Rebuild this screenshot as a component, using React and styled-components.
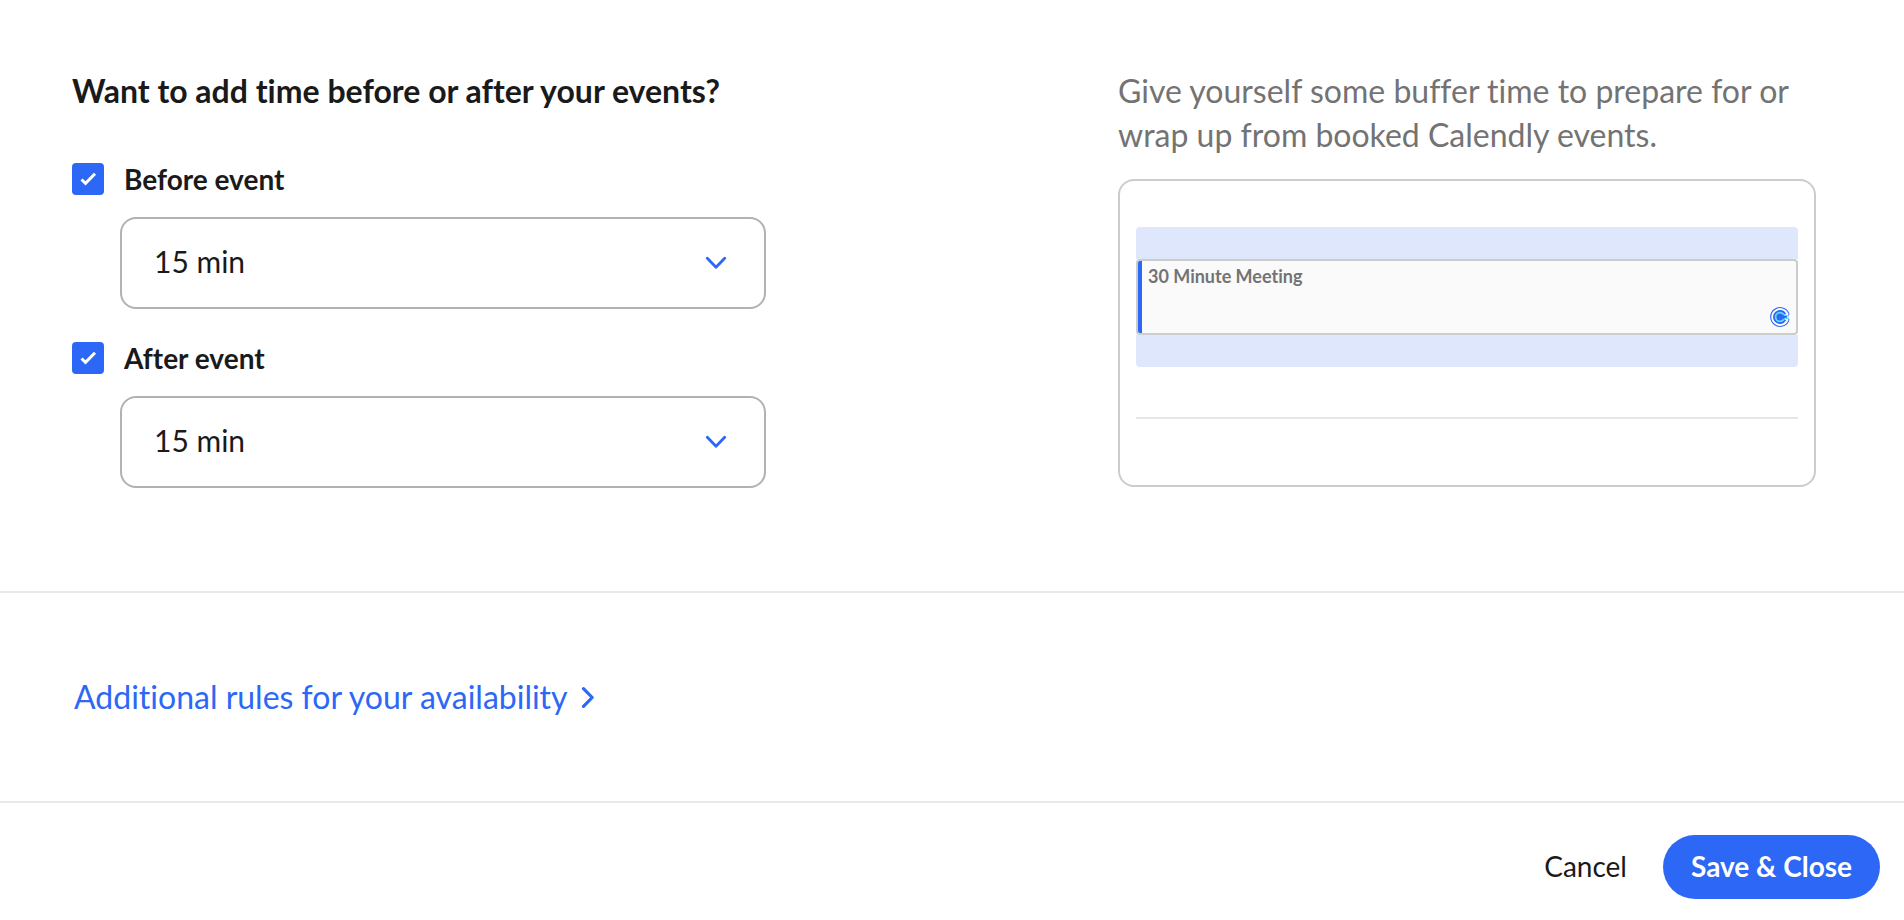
import React, { useId, useState } from "react";
import styled, { createGlobalStyle } from "styled-components";

const blue = "#2c67f6";

const GlobalStyle = createGlobalStyle`
  *, *::before, *::after { box-sizing: border-box; }
  body {
    margin: 0;
    background: #fff;
    color: #1a1a1a;
    font-family: Lato, "Open Sans", sans-serif;
    font-variant-ligatures: none;
  }
`;

const Page = styled.main`
  display: flex;
  flex-direction: column;
  min-height: 100vh;
`;

const BufferSection = styled.section`
  display: grid;
  grid-template-columns: 347fr 349fr;
  column-gap: 352px;
  padding: 69px 88px 103px 72px;
  border-bottom: 2px solid #e9e9e9;
`;

const Column = styled.div`
  display: flex;
  flex-direction: column;
  align-self: start;
  min-width: 0;
`;

const Title = styled.h2`
  margin: 0 0 50px;
  font-size: 32px;
  line-height: 44px;
  font-weight: 700;
  white-space: nowrap;
`;

const Fields = styled.div`
  display: flex;
  flex-direction: column;
  gap: 33px;
`;

const Field = styled.div`
  display: flex;
  flex-direction: column;
  gap: 22px;
`;

const CheckLabel = styled.label`
  display: flex;
  align-items: center;
  gap: 20px;
  font-size: 28px;
  line-height: 32px;
  font-weight: 700;
  cursor: pointer;
`;

const CheckWrap = styled.span`
  display: grid;
  width: 32px;
  height: 32px;
  & > * { grid-area: 1 / 1; }
  svg { pointer-events: none; }
`;

const Checkbox = styled.input`
  appearance: none;
  width: 32px;
  height: 32px;
  margin: 0;
  border: 2px solid #b2b2b2;
  border-radius: 4px;
  background: #fff;
  cursor: pointer;
  &:checked { background: ${blue}; border-color: ${blue}; }
`;

const SelectWrap = styled.div`
  display: grid;
  align-items: center;
  margin-left: 48px;
  & > * { grid-area: 1 / 1; }
  svg {
    justify-self: end;
    margin-right: 39px;
    pointer-events: none;
  }
`;

const Select = styled.select`
  appearance: none;
  width: 100%;
  height: 92px;
  padding: 0 80px 4px 32px;
  border: 2px solid #b2b2b2;
  border-radius: 16px;
  background: #fff;
  color: #1a1a1a;
  font-family: inherit;
  font-size: 30px;
  &:disabled { opacity: 0.5; }
`;

const Description = styled.p`
  margin: 0 0 22px;
  color: #737373;
  font-size: 32px;
  line-height: 44px;
`;

const Preview = styled.div`
  padding: 46px 16px 66px;
  border: 2px solid #ccc;
  border-radius: 16px;
`;

const Buffer = styled.div`
  height: 32px;
  background: #dfe7fd;
  border-radius: ${(p) => (p.$end ? "0 0 4px 4px" : "4px 4px 0 0")};
  visibility: ${(p) => (p.$shown ? "visible" : "hidden")};
`;

const Meeting = styled.div`
  display: flex;
  height: 76px;
  border: 2px solid #ccc;
  border-radius: 4px;
  overflow: hidden;
  background: #fafafa;
  color: #737373;
  font-size: 18px;
  line-height: 20px;
  font-weight: 700;
  &::before { content: ""; width: 4px; background: ${blue}; }
  svg { align-self: flex-end; margin: 6px; }
`;

const MeetingName = styled.span`
  flex: 1;
  padding: 5px 6px;
`;

const HourLine = styled.div`
  height: 2px;
  margin-top: 50px;
  background: #e6e6e6;
`;

const RulesSection = styled.section`
  padding: 82px 72px;
  border-bottom: 2px solid #e9e9e9;
`;

const RulesLink = styled.a`
  display: inline-flex;
  align-items: center;
  gap: 13px;
  padding-left: 2px;
  color: ${blue};
  font-size: 32px;
  line-height: 44px;
  text-decoration: none;
`;

const Footer = styled.footer`
  display: flex;
  justify-content: flex-end;
  align-items: center;
  gap: 8px;
  padding: 32px 24px 20px;
`;

const Button = styled.button`
  height: 64px;
  padding: 0 28px 2px;
  border: 0;
  border-radius: 32px;
  background: ${(p) => (p.$primary ? blue : "transparent")};
  color: ${(p) => (p.$primary ? "#fff" : "#1a1a1a")};
  font-family: inherit;
  font-size: 28px;
  font-weight: ${(p) => (p.$primary ? 700 : 400)};
  cursor: pointer;
`;

const Tick = () => (
  <svg width="32" height="32" viewBox="0 0 32 32" fill="none" aria-hidden="true">
    <path d="M9.5 16.5L13.5 20.3L23 10.7" stroke="#fff" strokeWidth="3" />
  </svg>
);

const ChevronDown = () => (
  <svg width="22" height="14" viewBox="0 0 22 14" fill="none" aria-hidden="true">
    <path d="M2.3 2.3L11 11.2L19.7 2.3" stroke={blue} strokeWidth="2.8" strokeLinecap="round" strokeLinejoin="round" />
  </svg>
);

const ChevronRight = () => (
  <svg width="14" height="22" viewBox="0 0 14 22" fill="none" aria-hidden="true">
    <path d="M2.5 2.7L11.2 11.5L2.5 20.3" stroke={blue} strokeWidth="3.2" strokeLinecap="round" strokeLinejoin="round" />
  </svg>
);

const BrandMark = () => (
  <svg width="20" height="20" viewBox="0 0 20 20" fill="none" aria-hidden="true">
    <path d="M18.8 6.4A9.4 9.4 0 1 0 18.8 13.6" stroke={blue} strokeWidth="1.1" />
    <path d="M18.8 6.4Q19.6 8 17.8 8.8M18.8 13.6Q19.6 12 17.8 11.2" stroke={blue} strokeWidth="1" />
    <path d="M16 6.4A7 7 0 1 0 16 13.6Q14.6 12.2 14.2 11.2H17V8.8H14.2Q14.6 7.8 16 6.4Z" fill={blue} />
    <path d="M13.6 7.4C12.6 6.2 11.4 5.6 10 5.6A4.4 4.4 0 0 0 10 14.4C11.4 14.4 12.6 13.8 13.6 12.6" stroke="#5fdcf5" strokeWidth="1.7" />
    <path d="M13.4 7.6Q15 8.8 19 8.8M13.4 12.4Q15 11.2 19 11.2" stroke="#5fdcf5" strokeWidth="1.3" />
  </svg>
);

function BufferField({ label, enabled, onToggle }) {
  const id = useId();
  return (
    <Field>
      <CheckLabel htmlFor={id}>
        <CheckWrap>
          <Checkbox id={id} type="checkbox" checked={enabled} onChange={(e) => onToggle(e.target.checked)} />
          {enabled && <Tick />}
        </CheckWrap>
        {label}
      </CheckLabel>
      <SelectWrap>
        <Select aria-label={label + " buffer"} defaultValue="15" disabled={!enabled}>
          <option value="15">15 min</option>
        </Select>
        <ChevronDown />
      </SelectWrap>
    </Field>
  );
}

export default function App() {
  const [before, setBefore] = useState(true);
  const [after, setAfter] = useState(true);
  return (
    <>
      <GlobalStyle />
      <Page>
        <BufferSection>
          <Column>
            <Title>Want to add time before or after your events?</Title>
            <Fields>
              <BufferField label="Before event" enabled={before} onToggle={setBefore} />
              <BufferField label="After event" enabled={after} onToggle={setAfter} />
            </Fields>
          </Column>
          <Column>
            <Description>
              Give yourself some buffer time to prepare for or wrap up from booked Calendly events.
            </Description>
            <Preview>
              <Buffer $shown={before} />
              <Meeting>
                <MeetingName>30 Minute Meeting</MeetingName>
                <BrandMark />
              </Meeting>
              <Buffer $end $shown={after} />
              <HourLine />
            </Preview>
          </Column>
        </BufferSection>
        <RulesSection>
          <RulesLink href="#rules">
            Additional rules for your availability
            <ChevronRight />
          </RulesLink>
        </RulesSection>
        <Footer>
          <Button type="button">Cancel</Button>
          <Button type="button" $primary>Save &amp; Close</Button>
        </Footer>
      </Page>
    </>
  );
}
